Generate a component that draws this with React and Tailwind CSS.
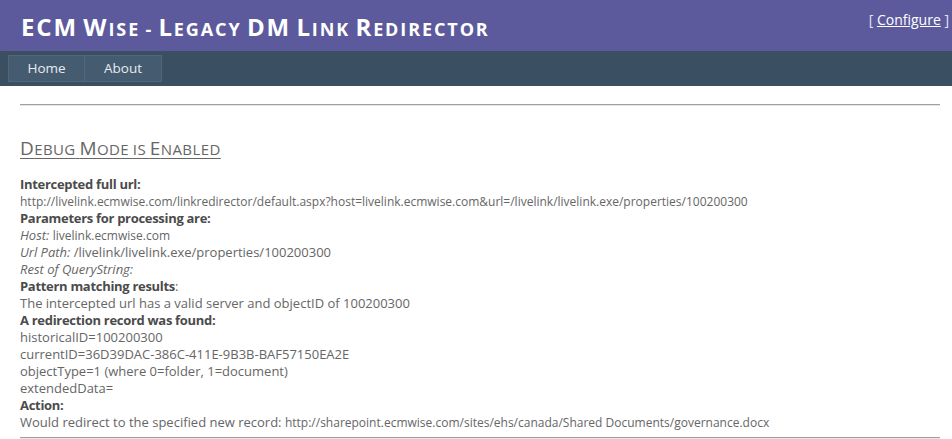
import React from 'react';

const font = { fontFamily: '"Open Sans", "Noto Sans", sans-serif' };

// fake small caps: initial capitals big, everything else uppercase at a smaller size
function SmallCaps({ text, big, small }) {
  return text.split(' ').map((word, i) => {
    const allCaps = word === word.toUpperCase() && /[A-Z]/.test(word);
    const lower = word[0] === word[0].toLowerCase();
    return (
      <React.Fragment key={i}>
        {i > 0 && ' '}
        {allCaps ? (
          <span className={big}>{word}</span>
        ) : lower ? (
          <span className={`uppercase ${small}`}>{word}</span>
        ) : (
          <>
            <span className={big}>{word[0]}</span>
            <span className={`uppercase ${small}`}>{word.slice(1)}</span>
          </>
        )}
      </React.Fragment>
    );
  });
}

function Line({ children, className = '' }) {
  return <div className={`h-[17px] whitespace-nowrap ${className}`}>{children}</div>;
}

function Label({ children }) {
  return <Line className="font-bold text-[13px] tracking-[-0.3px] text-[#4b4b4b]">{children}</Line>;
}

export default function App() {
  return (
    <div className="min-h-[439px] bg-white text-[13px] leading-[17px] text-[#666]" style={font}>
      <header className="flex h-[51px] items-start justify-between bg-[#5c5a9c] pl-[21px] pr-[3px]">
        <h1 className="mt-[10px] h-[34px] leading-[34px] font-bold text-white tracking-[1.9px]">
          <SmallCaps text="ECM Wise - Legacy DM Link Redirector" big="text-[24px]" small="text-[18px]" />
        </h1>
        <div className="mt-[11px] text-[14px] text-[#e4e4f2]">
          [ <a className="underline text-white">Configure</a> ]
        </div>
      </header>
      <nav className="flex h-[35px] items-start bg-[#3b4f63] pl-[8px] pt-[4px]">
        <a className="flex h-[27px] w-[77px] items-center justify-center border border-[#50677c] bg-[#455b70] text-[13.5px] text-[#e6ebf0]">Home</a>
        <a className="flex h-[27px] w-[77px] items-center justify-center border border-l-0 border-[#50677c] bg-[#455b70] text-[13.5px] text-[#e6ebf0]">About</a>
      </nav>
      <main className="pl-[20px] pr-[12px]">
        <div className="mt-[18px] h-[2px] border-t border-[#a0a0a0] bg-[#e6e6e6]" />
        <h2 className="mt-[30px] h-[24px] leading-[24px] tracking-[0.4px] text-[#666] underline underline-offset-[3px] decoration-1">
          <SmallCaps text="Debug Mode is Enabled" big="text-[19px]" small="text-[15px]" />
        </h2>
        <div className="mt-[16px]">
          <Label>Intercepted full url:</Label>
          <Line className="text-[12px]">http://livelink.ecmwise.com/linkredirector/default.aspx?host=livelink.ecmwise.com&amp;url=/livelink/livelink.exe/properties/100200300</Line>
          <Label>Parameters for processing are:</Label>
          <Line><i>Host:</i> <span className="text-[12px]">livelink.ecmwise.com</span></Line>
          <Line><i>Url Path:</i> /livelink/livelink.exe/properties/100200300</Line>
          <Line><i>Rest of QueryString:</i></Line>
          <Line><span className="font-bold tracking-[-0.3px] text-[#4b4b4b]">Pattern matching results</span>:</Line>
          <Line>The intercepted url has a valid server and objectID of 100200300</Line>
          <Label>A redirection record was found:</Label>
          <Line>historicalID=100200300</Line>
          <Line>currentID=36D39DAC-386C-411E-9B3B-BAF57150EA2E</Line>
          <Line>objectType=1 (where 0=folder, 1=document)</Line>
          <Line>extendedData=</Line>
          <Label>Action:</Label>
          <Line>Would redirect to the specified new record: <span className="text-[12px]">http://sharepoint.ecmwise.com/sites/ehs/canada/Shared Documents/governance.docx</span></Line>
        </div>
        <div className="mt-[6px] h-[2px] border-t border-[#a0a0a0] bg-[#e6e6e6]" />
      </main>
    </div>
  );
}
